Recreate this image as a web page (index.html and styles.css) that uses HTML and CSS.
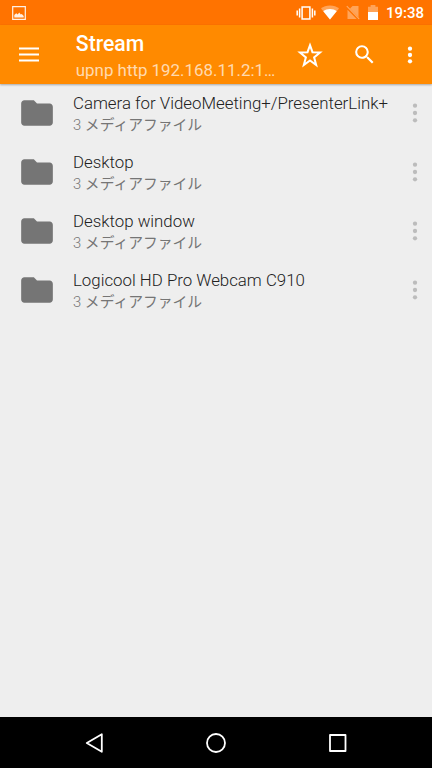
FILE: index.html
```html
<!DOCTYPE html>
<html lang="ja">
<head>
<meta charset="utf-8">
<title>Stream</title>
<link rel="stylesheet" href="styles.css">
</head>
<body>
<svg class="defs" aria-hidden="true">
  <symbol id="folder" viewBox="0 0 24 24"><path d="M10 4H4c-1.1 0-2 .9-2 2v12c0 1.1.9 2 2 2h16c1.1 0 2-.9 2-2V8c0-1.1-.9-2-2-2h-8z"/></symbol>
  <symbol id="dots" viewBox="0 0 6 20"><circle cx="3" cy="2.7" r="2.15"/><circle cx="3" cy="10" r="2.15"/><circle cx="3" cy="17.3" r="2.15"/></symbol>
</svg>
<div class="screen">
  <header class="status">
    <svg class="photo" viewBox="0 0 14 14"><path d="M.7.7h12.600v12.600H.7z" fill="none" stroke="currentColor" stroke-width="1.200"/><path d="M2.300 11.500V9l1.900-1.800 1.500 1.200L7.200 6.500l1.600 2 1-.5 1.900 2v1.500z"/></svg>
    <div class="status-icons">
      <svg class="vibrate" viewBox="0 0 20 16"><path d="M6.1 1.900h7.800v12.200H6.100z" fill="none" stroke="currentColor" stroke-width="1.500"/><path d="M3.600 3.600v8.800M16.400 3.600v8.800M1.200 5.500v5M18.800 5.500v5" stroke="currentColor" stroke-width="1.500"/></svg>
      <svg class="wifi" viewBox="0 0 18 15"><path d="M9 14.5 0 3.4C2.3 1.6 5.4.4 9 .4s6.7 1.2 9 3z" opacity=".35"/><path d="M9 14.5 2.3 6.2C4 4.900 6.400 4 9 4s5 .9 6.700 2.200z"/></svg>
      <svg class="sim" viewBox="0 0 14 15"><path d="M6.500 1H12.500v11.300L4 3.500zM1.500 4.700 10.700 14H1.500z" opacity=".35"/><path d="m.8 1.200 12.300 12.700" stroke="currentColor" stroke-width="1.100" opacity=".4"/></svg>
      <svg class="battery" viewBox="0 0 10 15"><path d="M0 7V1.800h2.600V0h4.800v1.800H10V7z" opacity=".35"/><path d="M0 7h10v8H0z"/></svg>
    </div>
    <time class="clock">19:38</time>
  </header>
  <div class="appbar">
    <svg class="menu" viewBox="0 0 20 15"><path d="M0 1.500h20M0 7.500h20M0 13.500h20" stroke="currentColor" stroke-width="2"/></svg>
    <div class="heading">
      <h1>Stream</h1>
      <p>upnp http 192.168.11.2:1…</p>
    </div>
    <svg class="star" viewBox="0 0 24 24"><path d="m12 2.900 2.300 6.500 7 .3-5.500 4.500 1.900 7-5.700-4.100-5.700 4.100 1.900-7-5.500-4.500 7-.3z" fill="none" stroke="currentColor" stroke-width="1.850"/></svg>
    <svg class="search" viewBox="0 0 24 24"><path d="M15.500 14h-.79l-.28-.27A6.471 6.471 0 0 0 16 9.500 6.500 6.500 0 1 0 9.500 16c1.610 0 3.090-.59 4.230-1.570l.27.28v.79l5 4.990L20.490 19zm-6 0C7.010 14 5 11.990 5 9.500S7.010 5 9.500 5 14 7.010 14 9.500 11.990 14 9.500 14z"/></svg>
    <svg class="overflow" viewBox="0 0 6 18"><circle cx="3" cy="2.700" r="2.150"/><circle cx="3" cy="9" r="2.150"/><circle cx="3" cy="15.300" r="2.150"/></svg>
  </div>
  <main class="list">
    <div class="row">
      <svg class="folder"><use href="#folder"/></svg>
      <div class="label"><h2>Camera for VideoMeeting+/PresenterLink+</h2><p>3 <span>メディアファイル</span></p></div>
      <svg class="more"><use href="#dots"/></svg>
    </div>
    <div class="row">
      <svg class="folder"><use href="#folder"/></svg>
      <div class="label"><h2>Desktop</h2><p>3 <span>メディアファイル</span></p></div>
      <svg class="more"><use href="#dots"/></svg>
    </div>
    <div class="row">
      <svg class="folder"><use href="#folder"/></svg>
      <div class="label"><h2>Desktop window</h2><p>3 <span>メディアファイル</span></p></div>
      <svg class="more"><use href="#dots"/></svg>
    </div>
    <div class="row">
      <svg class="folder"><use href="#folder"/></svg>
      <div class="label"><h2>Logicool HD Pro Webcam C910</h2><p>3 <span>メディアファイル</span></p></div>
      <svg class="more"><use href="#dots"/></svg>
    </div>
  </main>
  <nav class="navbar">
    <svg viewBox="0 0 20 20"><path d="M16.800 1.200v17.600L1.800 10z" fill="none" stroke="currentColor" stroke-width="1.800" stroke-linejoin="round"/></svg>
    <svg viewBox="0 0 20 20"><circle cx="10" cy="10" r="9" fill="none" stroke="currentColor" stroke-width="1.800"/></svg>
    <svg viewBox="0 0 20 20"><path d="M2 2h15.500v16H2z" fill="none" stroke="currentColor" stroke-width="1.800" stroke-linejoin="round"/></svg>
  </nav>
</div>
</body>
</html>
```
FILE: styles.css
```css
* { box-sizing: border-box; margin: 0; }
body { font-family: Roboto, "Noto Sans CJK JP", sans-serif; background: #eee; overflow: hidden; }
svg { display: block; flex: none; fill: currentColor; }
.defs { display: none; }
.screen { width: 432px; height: 768px; display: flex; flex-direction: column; background: #eee; }

.status { height: 25px; flex: none; display: flex; align-items: center; padding: 0 8px 0 12px; background: #ff7300; color: #fff; }
.photo { width: 14px; height: 14px; opacity: .9; }
.status-icons { display: flex; align-items: center; margin-left: 269.500px; height: 25px; }
.vibrate { width: 20px; height: 16px; }
.wifi { width: 18px; height: 15px; margin-left: 5px; }
.sim { width: 14px; height: 15px; margin-left: 7.500px; }
.battery { width: 10px; height: 15px; margin-left: 8px; }
.clock { margin-left: auto; font-size: 15px; font-weight: 500; line-height: 25px; padding-top: 2px; }

.appbar { height: 59px; flex: none; display: flex; align-items: center; padding-left: 19.300px; background: #ff8a00; color: #fff; box-shadow: 0 1px 2px rgba(0, 0, 0, .3); position: relative; }
.menu { width: 20px; height: 15px; }
.heading { width: 210px; margin-left: 36.500px; padding-top: 4px; white-space: nowrap; }
.heading h1 { font-size: 21.200px; line-height: 26px; font-weight: 500; }
.heading p { font-size: 16.900px; line-height: 26px; color: rgba(255, 255, 255, .7); }
.star { width: 26px; height: 26px; margin-left: 11.200px; }
.search { width: 25.200px; height: 25.200px; margin-left: 29.200px; }
.overflow { width: 6px; height: 18px; margin-left: 29.200px; }

.list { flex: 1; }
.row { height: 58.800px; display: flex; align-items: center; padding-left: 17.500px; color: #757575; }
.folder { width: 38px; height: 38px; }
.label { width: 330px; margin-left: 17.500px; padding-top: 3px; white-space: nowrap; }
.label h2 { font-size: 16.840px; line-height: 21px; font-weight: 300; color: #212121; }
.label p { font-size: 14.800px; line-height: 22px; font-weight: 300; }
.label span { font-weight: 400; }
.more { width: 6px; height: 20px; margin-left: 9px; color: #bcbcbc; }

.navbar { height: 51px; flex: none; display: flex; align-items: center; justify-content: center; gap: 101.500px; background: #000; color: #fff; }
.navbar svg { width: 20px; height: 20px; }
```
